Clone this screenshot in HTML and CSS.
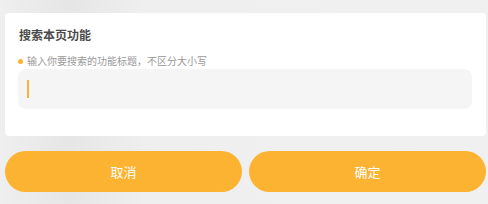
FILE: index.html
```html
<!DOCTYPE html>
<html lang="zh-CN">
<head>
    <meta charset="UTF-8">
    <meta name="viewport" content="width=device-width, initial-scale=1.0">
    <title>搜索本页功能</title>
    <link rel="stylesheet" href="styles.css">
</head>
<body>
    <div class="dialog">
        <section class="panel">
            <h2 class="panel-title">搜索本页功能</h2>
            <p class="hint"><span class="dot"></span>输入你要搜索的功能标题，不区分大小写</p>
            <div class="search-box"><span class="caret"></span></div>
        </section>
        <div class="actions">
            <button class="btn">取消</button>
            <button class="btn">确定</button>
        </div>
    </div>
</body>
</html>
```

FILE: styles.css
```css
body {
    margin: 0;
    padding: 0;
    font-family: "Noto Sans CJK SC", "Noto Sans", sans-serif;
    background-color: #f0efee;
    background-image: linear-gradient(90deg, #efefef 0%, #e6e6e6 14%, #efefef 30%, #f0f0f0 100%);
    height: 204px;
    overflow: hidden;
}

.dialog {
    padding: 13px 2px 0 5px;
}

.panel {
    background-color: white;
    border-radius: 4px;
    padding: 14px 14px 27px 13px;
}

.panel-title {
    margin: 0;
    font-size: 12px;
    line-height: 16px;
    font-weight: 700;
    color: #4a4a4a;
    padding-left: 1px;
}

.hint {
    margin: 11px 0 1px 0;
    font-size: 10px;
    line-height: 14px;
    color: #999;
    display: flex;
    align-items: center;
}

.dot {
    width: 5px;
    height: 5px;
    border-radius: 50%;
    background-color: #fbb331;
    margin: 0 4px 0 0;
}

.search-box {
    background-color: #f5f5f5;
    border-radius: 8px;
    height: 40px;
    display: flex;
    align-items: center;
    padding-left: 9px;
}

.caret {
    width: 2px;
    height: 18px;
    background-color: #f8b23a;
}

.actions {
    display: flex;
    gap: 7px;
    margin-top: 15px;
}

.btn {
    flex: 1;
    height: 41px;
    border: none;
    border-radius: 21px;
    background-color: #fbb331;
    color: white;
    font-family: "Noto Sans CJK SC", sans-serif;
    font-size: 13px;
}
```
